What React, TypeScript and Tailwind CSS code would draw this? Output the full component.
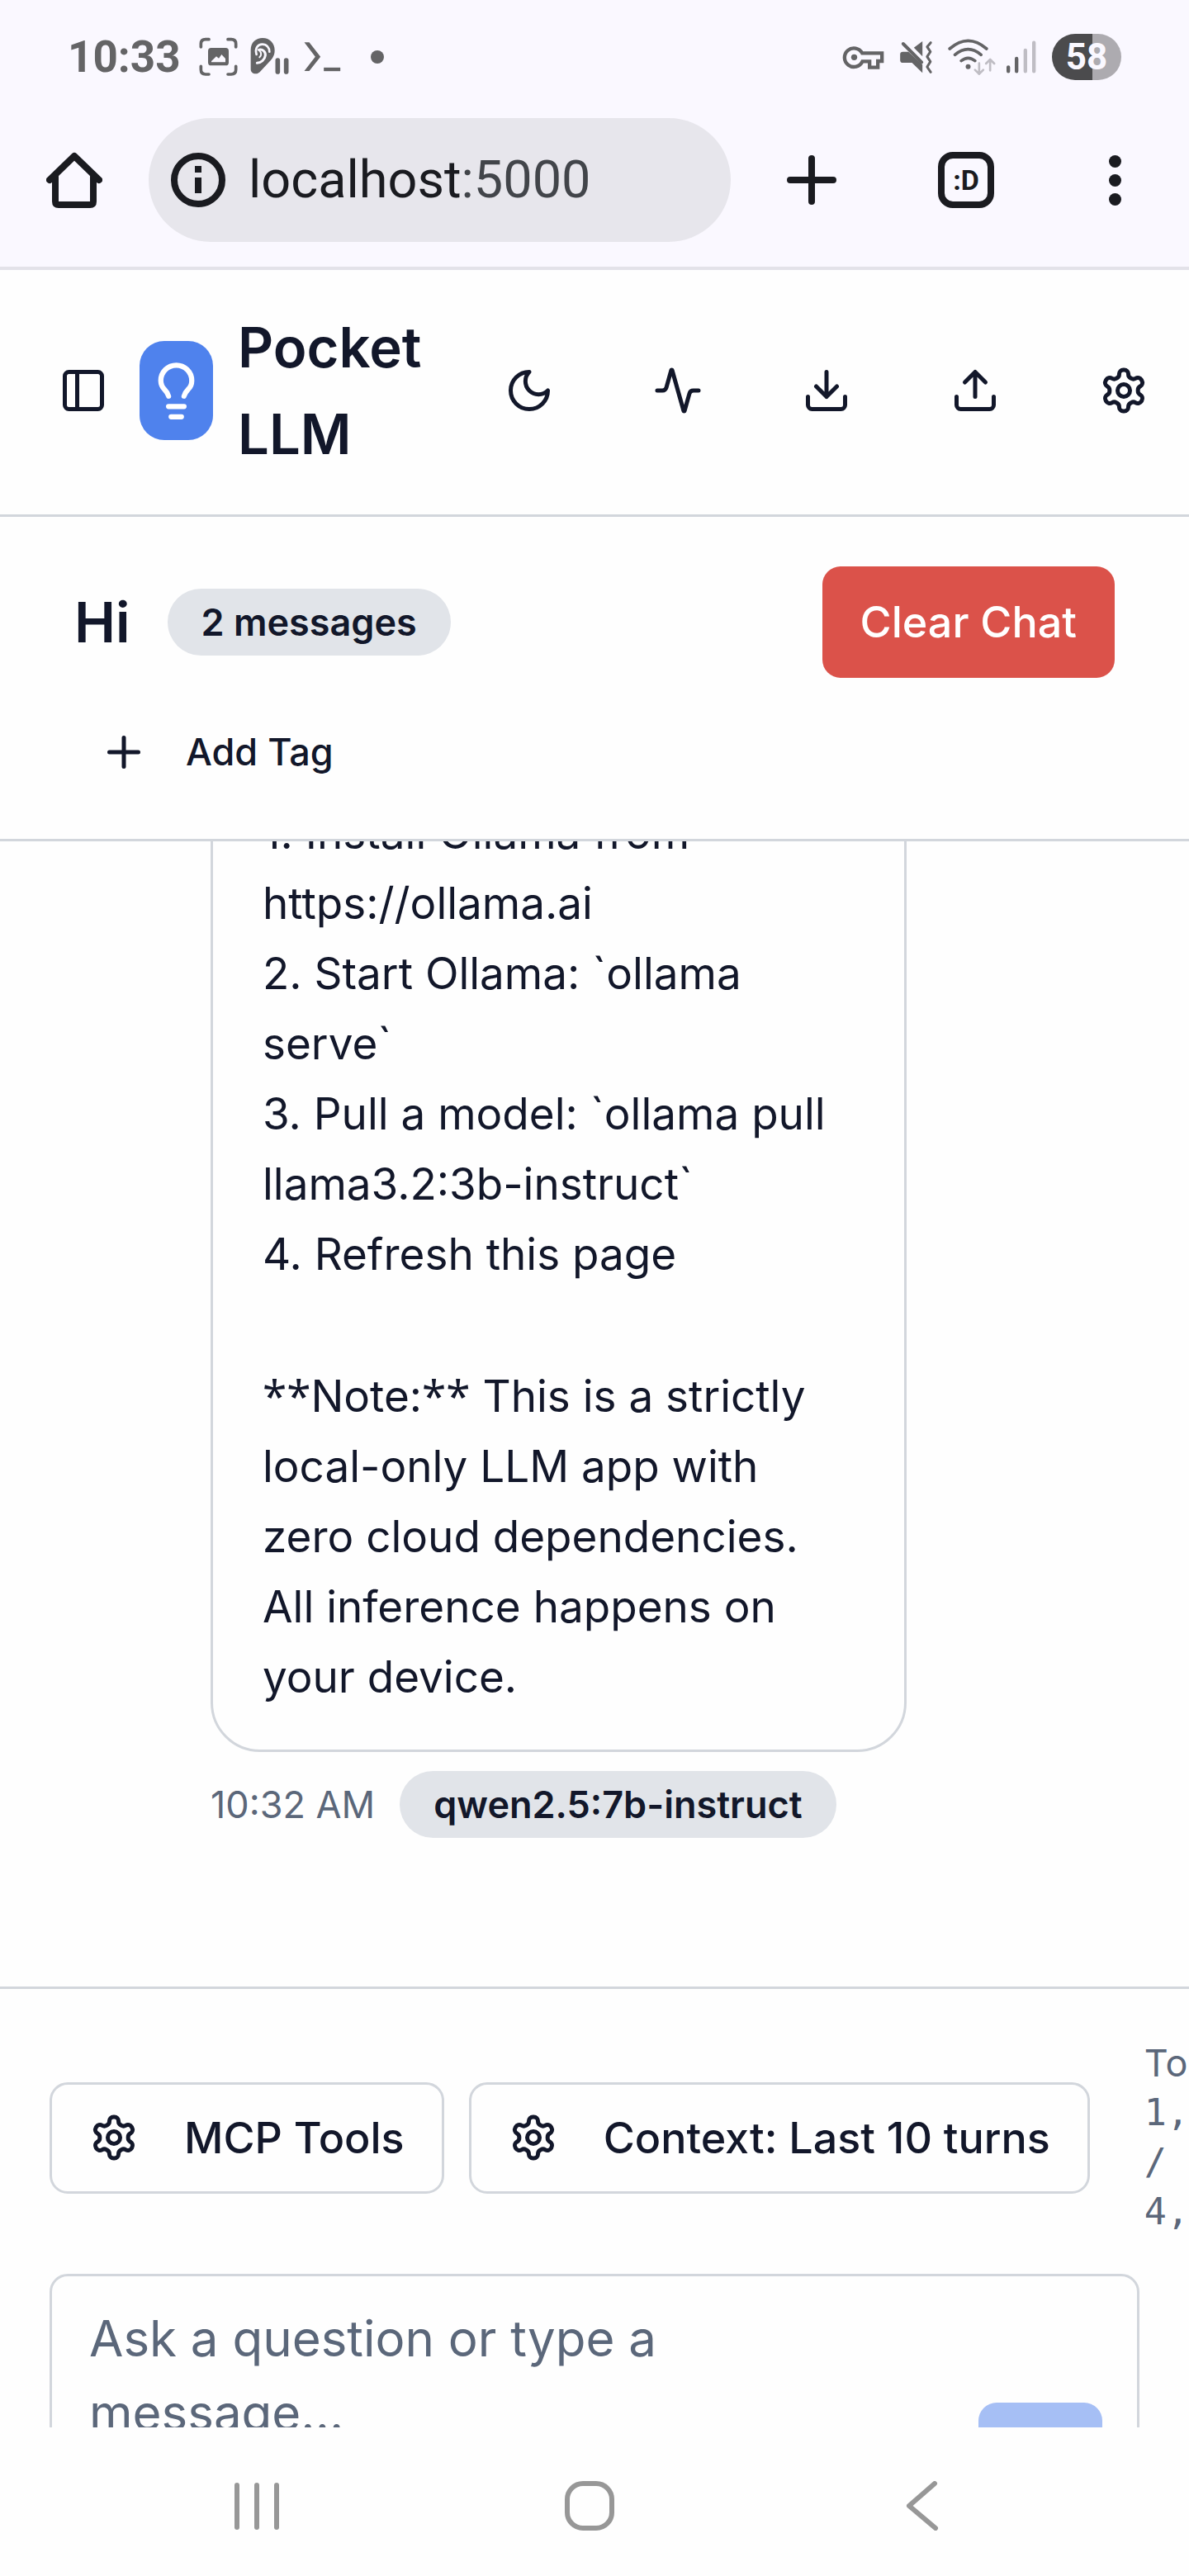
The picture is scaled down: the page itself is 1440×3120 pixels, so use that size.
import type { ReactNode } from "react";

function Icon({ children, className = "size-[60px]" }: { children: ReactNode; className?: string }) {
  return (
    <svg
      viewBox="0 0 24 24"
      fill="none"
      stroke="currentColor"
      strokeWidth="2"
      strokeLinecap="round"
      strokeLinejoin="round"
      aria-hidden="true"
      className={`shrink-0 ${className}`}
    >
      {children}
    </svg>
  );
}

function GearIcon() {
  return (
    <Icon>
      <path d="M12.22 2h-.44a2 2 0 0 0-2 2v.18a2 2 0 0 1-1 1.73l-.43.25a2 2 0 0 1-2 0l-.15-.08a2 2 0 0 0-2.73.73l-.22.38a2 2 0 0 0 .73 2.73l.15.1a2 2 0 0 1 1 1.72v.51a2 2 0 0 1-1 1.74l-.15.09a2 2 0 0 0-.73 2.73l.22.38a2 2 0 0 0 2.73.73l.15-.08a2 2 0 0 1 2 0l.43.25a2 2 0 0 1 1 1.73V20a2 2 0 0 0 2 2h.44a2 2 0 0 0 2-2v-.18a2 2 0 0 1 1-1.73l.43-.25a2 2 0 0 1 2 0l.15.08a2 2 0 0 0 2.73-.73l.22-.39a2 2 0 0 0-.73-2.73l-.15-.08a2 2 0 0 1-1-1.74v-.5a2 2 0 0 1 1-1.74l.15-.09a2 2 0 0 0 .73-2.73l-.22-.38a2 2 0 0 0-2.73-.73l-.15.08a2 2 0 0 1-2 0l-.43-.25a2 2 0 0 1-1-1.73V4a2 2 0 0 0-2-2z" />
      <circle cx="12" cy="12" r="3" />
    </Icon>
  );
}

function StatusBar() {
  return (
    <div className="flex h-[138px] items-center pr-[82px] pl-[82px] font-[Roboto,sans-serif] text-[#646466]">
      <time className="text-[53px] leading-[60px] font-bold">10:33</time>
      <div className="ml-5 flex items-center">
        <svg viewBox="30 38 156 156" className="size-[52px]" fill="none" stroke="currentColor" strokeWidth="11" strokeLinecap="round">
          <path d="M43 80V68Q43 52 60 52H72M141 52h12q17 0 17 16v12M170 150v12q0 17-17 17h-12M72 179H60q-17 0-17-17v-12" />
          <rect x="69" y="83" width="75" height="64" rx="11" fill="currentColor" stroke="none" />
          <path d="M81 131L99 114L108 121L118 107L132 122V135H81Z" fill="#faf8ff" stroke="none" />
        </svg>
        <svg viewBox="220 38 150 156" className="ml-[11px] h-[52px] w-[50px]" fill="none" strokeLinecap="round">
          <path
            d="M225 90C225 63 244 47 268 47C294 47 312 66 312 92C312 110 304 122 292 134L262 166C255 174 250 177 243 177C232 177 225 170 225 160Z"
            fill="currentColor"
          />
          <path d="M246 107C239 84 251 70 267 70C283 70 293 82 293 97" stroke="#faf8ff" strokeWidth="8" />
          <path d="M254 90C268 86 280 97 278 111C276 126 262 138 248 138" stroke="#faf8ff" strokeWidth="9" />
          <path d="M256 92C264 100 265 110 257 117" stroke="#faf8ff" strokeWidth="6" />
          <path d="M323 128V170M354 128V170" stroke="currentColor" strokeWidth="17" />
        </svg>
        <svg viewBox="415 38 140 156" className="ml-[15px] h-[52px] w-[47px]" fill="none">
          <path d="M419 63H437L478 115L437 167H419L459 115Z" fill="currentColor" />
          <path d="M490 161H550" stroke="currentColor" strokeWidth="13" />
        </svg>
        <span className="ml-[35px] size-4 rounded-full bg-current" />
      </div>
      <div className="ml-auto flex items-center">
        <svg viewBox="30 30 710 168" className="h-[56px] w-[237px]" fill="none" stroke="currentColor" strokeLinecap="round">
          <path d="M102 100H174V129H159V152H129V130H103A34 34 0 1 1 102 100Z" strokeWidth="13" strokeLinecap="butt" />
          <circle cx="73" cy="115" r="11" fill="currentColor" stroke="none" />
          <path d="M250 95H270L321 142V172L283 135H250Q240 135 240 125V104Q240 95 250 95Z" fill="currentColor" stroke="none" />
          <path d="M321 57V112L290 80Z" fill="currentColor" stroke="none" />
          <path d="M251 66L318 133" strokeWidth="12" />
          <path d="M351 62L338 77L350 95L338 113L350 131L338 150L351 169" strokeWidth="9" strokeLinejoin="round" />
          <path d="M420 84Q487 26 554 84M439 106Q487 66 534 106M462 128Q487 108 512 128" strokeWidth="11" />
          <circle cx="487" cy="149" r="9" fill="currentColor" stroke="none" />
          <path d="M527 137V176M512 161L527 176L542 161M567 163V124M552 138L567 123L582 138" stroke="#bfbdc4" strokeWidth="8" strokeLinejoin="round" />
          <path d="M633 151V166M663 120V166" strokeWidth="13" />
          <path d="M695 90V166M726 62V166" stroke="#bfbdc4" strokeWidth="13" />
        </svg>
        <span className="ml-[17px] flex h-[56px] w-[84px] items-center justify-center rounded-full bg-[linear-gradient(to_right,#4b4b4d_58%,#adabb0_58%)] text-[44px] leading-[56px] font-bold text-[#faf8ff]">
          58
        </span>
      </div>
    </div>
  );
}

function BrowserBar() {
  return (
    <div className="flex items-center border-b-4 border-[#e3e2e9] pt-[5px] pr-[67px] pb-[30px] pl-[56px] text-[#1a1b20]">
      <button type="button" aria-label="Home" className="shrink-0">
        <svg viewBox="0 0 68 68" className="size-[68px]" fill="none" stroke="currentColor" strokeWidth="8" strokeLinejoin="round" strokeLinecap="round">
          <path d="M4 34L34 5L64 34M11 29V60Q11 64 15 64H53Q57 64 57 60V29" />
        </svg>
      </button>
      <button
        type="button"
        className="ml-[56px] flex h-[150px] min-w-0 flex-1 items-center gap-7 rounded-full bg-[#e7e6ec] pl-[27px] font-[Roboto,sans-serif] text-[63px] leading-[72px]"
      >
        <svg viewBox="0 0 66 66" className="size-[66px] shrink-0" fill="none" stroke="currentColor" strokeWidth="8">
          <circle cx="33" cy="33" r="29" />
          <path d="M33 30V49M33 16V24" />
        </svg>
        <span>
          localhost<span className="text-[#42454a]">:5000</span>
        </span>
      </button>
      <div className="ml-[68px] flex items-center gap-[123px]">
        <button type="button" aria-label="New tab">
          <svg viewBox="0 0 60 60" className="size-[60px]" fill="none" stroke="currentColor" strokeWidth="8" strokeLinecap="round">
            <path d="M30 4V56M4 30H56" />
          </svg>
        </button>
        <button
          type="button"
          aria-label="Open tabs"
          className="flex size-[68px] items-center justify-center rounded-[18px] border-8 border-current font-[Roboto,sans-serif] text-[34px] leading-[40px] font-bold"
        >
          :D
        </button>
        <button type="button" aria-label="Browser menu" className="flex w-[46px] flex-col items-center gap-2">
          <span className="size-[15px] rounded-full bg-current" />
          <span className="size-[15px] rounded-full bg-current" />
          <span className="size-[15px] rounded-full bg-current" />
        </button>
      </div>
    </div>
  );
}

const headerActions: { label: string; icon: ReactNode }[] = [
  {
    label: "Toggle theme",
    icon: (
      <Icon>
        <path d="M12 3a6 6 0 0 0 9 9 9 9 0 1 1-9-9Z" />
      </Icon>
    ),
  },
  {
    label: "Activity",
    icon: (
      <Icon>
        <path d="M22 12h-2.48a2 2 0 0 0-1.93 1.46l-2.35 8.36a.25.25 0 0 1-.48 0L9.24 2.18a.25.25 0 0 0-.48 0l-2.35 8.36A2 2 0 0 1 4.49 12H2" />
      </Icon>
    ),
  },
  {
    label: "Export",
    icon: (
      <Icon>
        <path d="M21 15v4a2 2 0 0 1-2 2H5a2 2 0 0 1-2-2v-4M7 10l5 5 5-5M12 15V3" />
      </Icon>
    ),
  },
  {
    label: "Import",
    icon: (
      <Icon>
        <path d="M21 15v4a2 2 0 0 1-2 2H5a2 2 0 0 1-2-2v-4M17 8l-5-5-5 5M12 3v12" />
      </Icon>
    ),
  },
  { label: "Settings", icon: <GearIcon /> },
];

function AppHeader() {
  return (
    <header className="flex items-center border-b-3 border-[#d2d6dc] pt-[41px] pr-1 pb-[45px] pl-12">
      <button type="button" aria-label="Toggle sidebar" className="flex size-[105px] shrink-0 items-center justify-center">
        <Icon>
          <rect width="18" height="18" x="3" y="3" rx="2" />
          <path d="M9 3v18" />
        </Icon>
      </button>
      <div className="ml-4 flex h-[120px] w-[89px] shrink-0 items-center justify-center rounded-[30px] bg-[#4f82ed] text-white">
        <Icon className="size-[75px]">
          <path d="M15 14c.2-1 .7-1.7 1.5-2.5 1-.9 1.5-2.2 1.5-3.5A6 6 0 0 0 6 8c0 1 .2 2.2 1.5 3.5.7.7 1.3 1.5 1.5 2.5M9 18h6M10 22h4" />
        </Icon>
      </div>
      <h1 className="ml-[30px] w-[240px] text-[67px] leading-[105px] font-semibold">Pocket LLM</h1>
      <div className="ml-auto flex gap-[30px]">
        {headerActions.map((action) => (
          <button key={action.label} type="button" aria-label={action.label} className="flex size-[150px] items-center justify-center">
            {action.icon}
          </button>
        ))}
      </div>
    </header>
  );
}

function ChatHeader() {
  return (
    <section className="flex flex-col gap-[30px] border-b-3 border-[#d2d6dc] px-[90px] pt-[60px] pb-[45px]">
      <div className="flex items-center">
        <h2 className="text-[67px] leading-[105px] font-semibold">Hi</h2>
        <span className="ml-[45px] rounded-full bg-[#e1e4e9] px-[41px] py-[10px] text-[45px] leading-[61px] font-semibold">2 messages</span>
        <button type="button" className="ml-auto h-[135px] rounded-[22px] bg-[#db524a] px-[46px] text-[52px] leading-[75px] font-medium text-white">
          Clear Chat
        </button>
      </div>
      <button type="button" className="flex h-[120px] items-center gap-[45px] self-start px-[30px] text-[45px] leading-[60px] font-medium">
        <Icon>
          <path d="M5 12h14M12 5v14" />
        </Icon>
        Add Tag
      </button>
    </section>
  );
}

const setupSteps = [
  "1. Install Ollama from https://ollama.ai",
  "2. Start Ollama: `ollama serve`",
  "3. Pull a model: `ollama pull llama3.2:3b-instruct`",
  "4. Refresh this page",
];

function Stars() {
  return <span className="font-['Noto_Sans',sans-serif] leading-none">**</span>;
}

function Conversation() {
  return (
    <main className="flex min-h-0 flex-1 flex-col justify-end overflow-hidden pr-[342px] pb-[180px] pl-[255px]">
      <article className="flex flex-col gap-[87px] rounded-[60px] border-3 border-[#d2d6dc] px-[60px] py-[45px] text-[53px] leading-[85px]">
        <div>
          {setupSteps.map((step) => (
            <p key={step}>{step}</p>
          ))}
        </div>
        <p>
          <Stars />
          Note:
          <Stars /> This is a strictly local-only LLM app with zero cloud dependencies. All inference happens on your device.
        </p>
      </article>
      <div className="mt-[23px] flex items-center gap-[30px] text-[45px] leading-[61px]">
        <time className="whitespace-nowrap text-[#5b677a]">10:32 AM</time>
        <span className="rounded-full bg-[#e1e4e9] px-[41px] py-[10px] font-semibold whitespace-nowrap">qwen2.5:7b-instruct</span>
      </div>
    </main>
  );
}

function ToolButton({ label }: { label: string }) {
  return (
    <button
      type="button"
      className="flex h-[135px] shrink-0 items-center gap-[55px] rounded-[22px] border-3 border-[#d2d6dc] px-[45px] text-[52px] leading-[75px] font-medium whitespace-nowrap"
    >
      <GearIcon />
      {label}
    </button>
  );
}

function Composer() {
  return (
    <footer className="h-[534px] shrink-0 overflow-hidden border-t-3 border-[#d2d6dc] px-[60px] pt-[60px]">
      <div className="flex items-center">
        <ToolButton label="MCP Tools" />
        <div className="ml-[30px] flex">
          <ToolButton label="Context: Last 10 turns" />
        </div>
        <div className="ml-[66px] w-0 text-[45px] leading-[60px] text-[#5b677a]">
          <p>Tokens:</p>
          <p className="font-['DejaVu_Sans_Mono',monospace]">1,024 / 4,096</p>
        </div>
      </div>
      <div className="relative mt-[45px]">
        <textarea
          aria-label="Message"
          placeholder="Ask a question or type a message..."
          className="block h-[345px] w-full resize-none overflow-hidden rounded-[22px] border-3 border-[#d2d6dc] py-[30px] pr-[300px] pl-[45px] text-[60px] leading-[90px] outline-none placeholder:text-[#5b677a]"
        />
        <button type="button" disabled aria-label="Send" className="absolute right-[45px] bottom-[39px] flex size-[150px] items-center justify-center rounded-[22px] bg-[#a6bff5] text-white">
          <Icon>
            <path d="m22 2-7 20-4-9-9-4ZM22 2 11 13" />
          </Icon>
        </button>
      </div>
    </footer>
  );
}

function SystemNav() {
  return (
    <nav aria-label="System navigation" className="grid h-[180px] shrink-0 grid-cols-3 items-center justify-items-center pt-[10px] pr-[122px] pl-[109px] text-[#979797]">
      <button type="button" aria-label="Recent apps" className="flex gap-[18px]">
        <span className="h-[57px] w-[6px] rounded-full bg-current" />
        <span className="h-[57px] w-[6px] rounded-full bg-current" />
        <span className="h-[57px] w-[6px] rounded-full bg-current" />
      </button>
      <button type="button" aria-label="Home screen" className="size-[60px] rounded-[22px] border-6 border-current" />
      <button type="button" aria-label="Back">
        <svg viewBox="0 0 40 60" className="h-[60px] w-[40px]" fill="none" stroke="currentColor" strokeWidth="6" strokeLinecap="round" strokeLinejoin="round">
          <path d="M35 3L4 30L36 57" />
        </svg>
      </button>
    </nav>
  );
}

export default function App() {
  return (
    <div className="flex h-screen flex-col overflow-hidden bg-[#fefefe] font-[Inter,sans-serif] text-[#12172a]">
      <div className="bg-[#faf8ff]">
        <StatusBar />
        <BrowserBar />
      </div>
      <AppHeader />
      <ChatHeader />
      <Conversation />
      <Composer />
      <SystemNav />
    </div>
  );
}
